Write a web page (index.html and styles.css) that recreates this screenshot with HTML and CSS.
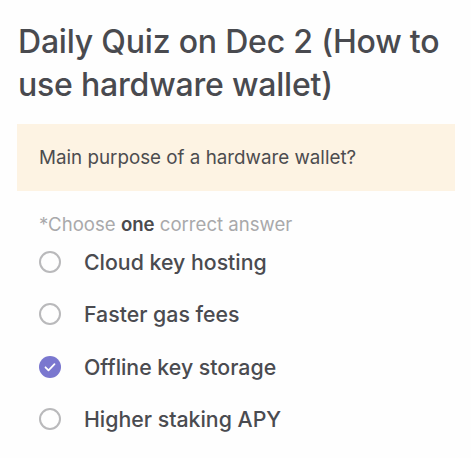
FILE: index.html
```html
<!DOCTYPE html>
<html>
<head>
<meta charset="utf-8">
<link rel="stylesheet" href="styles.css">
</head>
<body>
<div class="page">
  <h1 class="title">Daily Quiz on Dec 2 (How to use hardware wallet)</h1>
  <div class="question">Main purpose of a hardware wallet?</div>
  <div class="hint">*Choose <b>one</b> correct answer</div>
  <ul class="options">
    <li class="option"><span class="radio"></span><span class="label">Cloud key hosting</span></li>
    <li class="option"><span class="radio"></span><span class="label">Faster gas fees</span></li>
    <li class="option"><span class="radio checked"><svg viewBox="0 0 22 22" width="22" height="22"><path d="M6.5 11.3l3 3 6-6.2" fill="none" stroke="#fff" stroke-width="1.8" stroke-linecap="round" stroke-linejoin="round"/></svg></span><span class="label">Offline key storage</span></li>
    <li class="option"><span class="radio"></span><span class="label">Higher staking APY</span></li>
  </ul>
</div>
</body>
</html>
```

FILE: styles.css
```css
* { box-sizing: border-box; }
html, body { margin: 0; padding: 0; background: #fefefe; }
body { font-family: Inter, "Noto Sans", sans-serif; color: #4a4b50; }
.page { padding: 20px 16px 0 17px; width: 471px; }
.title {
  margin: 0 0 0 1px;
  font-size: 32px;
  font-weight: 500;
  line-height: 43px;
  letter-spacing: -0.2px;
  color: #494a4f;
}
.question {
  margin-top: 18px;
  background: #fdf3e3;
  height: 67px;
  padding: 0 22px;
  display: flex;
  align-items: center;
  font-size: 18.8px;
  color: #4c4c4f;
  width: 438px;
}
.hint {
  margin-top: 21px;
  padding-left: 22px;
  font-size: 18.6px;
  color: #a9a9ab;
  line-height: 24px;
}
.hint b { color: #4a4a4d; font-weight: 600; }
.options { list-style: none; margin: 0 0 0 0; padding: 0 0 0 22px; }
.option {
  display: flex;
  align-items: center;
  height: 52.3px;
}
.radio {
  width: 22px; height: 22px;
  border-radius: 50%;
  border: 2px solid #b9b9bb;
  flex: none;
  display: flex;
  align-items: center;
  justify-content: center;
}
.radio.checked { background: #7a77cf; border: none; }
.label {
  margin-left: 23px;
  font-size: 21.3px;
  font-weight: 500;
  color: #4a4b50;
}
```
